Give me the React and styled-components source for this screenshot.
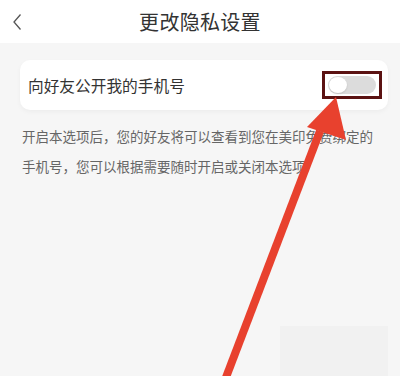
import React, { useState } from 'react'
import styled, { createGlobalStyle } from 'styled-components'

const Global = createGlobalStyle`
  html, body { margin: 0; padding: 0; }
  body {
    background: #f6f6f6;
    font-family: "Noto Sans CJK SC", "Noto Sans", sans-serif;
  }
`

const Page = styled.div`
  position: relative;
  width: 400px;
  height: 376px;
  overflow: hidden;
  background: #f6f6f6;
`

const NavBar = styled.header`
  height: 43px;
  background: #fff;
  display: grid;
  grid-template-columns: 44px 1fr 44px;
  align-items: center;
`

const Back = styled.button`
  border: 0;
  background: none;
  padding: 0 0 0 12px;
  height: 43px;
  display: flex;
  align-items: center;
  color: #555;
`

const Title = styled.h1`
  margin: 0;
  text-align: center;
  font-size: 20px;
  font-weight: 400;
  color: #333;
  letter-spacing: 0.3px;
`

const Body = styled.main`
  padding: 17px 12px 0 20px;
`

const Card = styled.section`
  height: 50px;
  background: #fff;
  border-radius: 10px;
  box-shadow: 0 2px 5px rgba(0, 0, 0, 0.04);
  display: flex;
  align-items: center;
  justify-content: space-between;
  padding: 0 6px 0 8px;
`

const Label = styled.span`
  font-size: 15.7px;
  color: #333;
`

const Highlight = styled.div`
  border: 3px solid #5b1212;
  padding: 2px 3px;
  display: flex;
`

const Track = styled.button`
  width: 48px;
  height: 18px;
  border: 0;
  border-radius: 9px;
  padding: 1px;
  background: ${p => (p.$on ? '#f25a3c' : '#dcdcdc')};
  display: flex;
  justify-content: ${p => (p.$on ? 'flex-end' : 'flex-start')};
  cursor: pointer;
`

const Knob = styled.span`
  width: 18px;
  height: 16px;
  border-radius: 50%;
  background: #fff;
  box-shadow: 0 1px 2px rgba(0, 0, 0, 0.12);
`

const Note = styled.p`
  margin: 11px 0 0 2px;
  max-width: 356px;
  font-size: 13.5px;
  line-height: 30px;
  color: #666;
`

const Patch = styled.div`
  position: absolute;
  left: 280px;
  top: 326px;
  width: 108px;
  height: 50px;
  background: #f1f1f1;
`

const Overlay = styled.svg`
  position: absolute;
  left: 0;
  top: 0;
  pointer-events: none;
`

export default function App() {
  const [on, setOn] = useState(false)
  return (
    <Page>
      <Global />
      <NavBar>
        <Back aria-label="返回">
          <svg width="10" height="18" viewBox="0 0 10 18">
            <path d="M8.5 1.5 L2 9 L8.5 16.5" fill="none" stroke="#555" strokeWidth="1.3" />
          </svg>
        </Back>
        <Title>更改隐私设置</Title>
        <span />
      </NavBar>
      <Body>
        <Card>
          <Label>向好友公开我的手机号</Label>
          <Highlight>
            <Track $on={on} onClick={() => setOn(!on)}>
              <Knob />
            </Track>
          </Highlight>
        </Card>
        <Note>
          开启本选项后，您的好友将可以查看到您在美印免费绑定的手机号，您可以根据需要随时开启或关闭本选项
        </Note>
      </Body>
      <Patch />
      <Overlay width="400" height="376" viewBox="0 0 400 376">
        <line x1="225" y1="380" x2="320" y2="131" stroke="#e8412e" strokeWidth="8" />
        <polygon points="336,97 346,140 307,127" fill="#e8412e" />
      </Overlay>
    </Page>
  )
}
